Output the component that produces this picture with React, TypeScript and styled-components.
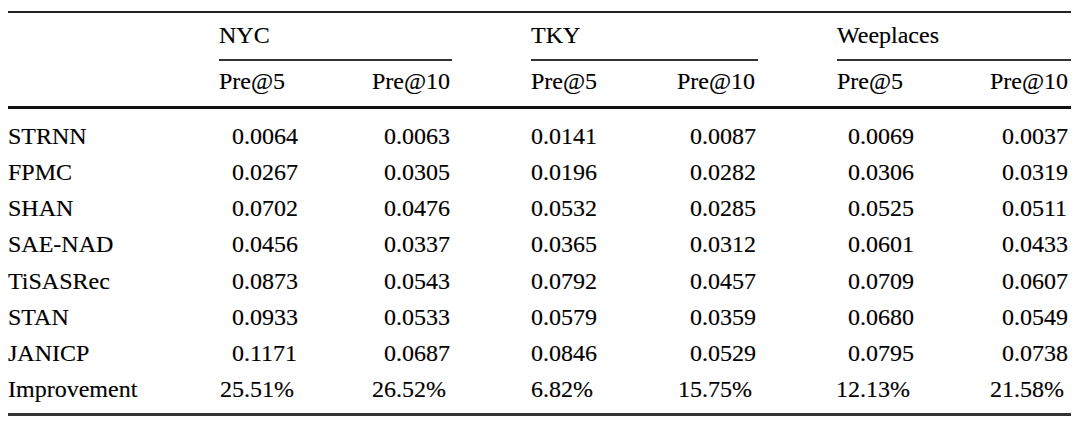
import React from "react";
import styled, { createGlobalStyle } from "styled-components";

const Global = createGlobalStyle`
  html, body {
    margin: 0;
    padding: 0;
    background: #ffffff;
  }
  body {
    font-family: "Liberation Serif", "Times New Roman", serif;
    color: #000000;
  }
`;

const Page = styled.div`
  padding: 11px 0 0 8px;
  width: 1080px;
  box-sizing: border-box;
`;

const Table = styled.div`
  display: grid;
  width: 1063px;
  grid-template-columns: 211px 153px 80px 79px 146px 81px 79px 153px 81px;
  grid-auto-rows: auto;
  font-size: 24px;
  -webkit-text-stroke: 0.15px #000;
`;

const Rule = styled.div<{ $weight: number; $col: string; $before?: number; $after?: number; $tone?: string }>`
  grid-column: ${(p) => p.$col};
  height: ${(p) => p.$weight}px;
  background: ${(p) => p.$tone ?? "#222"};
  margin-top: ${(p) => p.$before ?? 0}px;
  margin-bottom: ${(p) => p.$after ?? 0}px;
`;

const HeadCell = styled.div<{ $col: string; $top: number; $bottom: number }>`
  grid-column: ${(p) => p.$col};
  line-height: 36px;
  padding-top: ${(p) => p.$top}px;
  padding-bottom: ${(p) => p.$bottom}px;
  white-space: nowrap;
`;

const Label = styled.div`
  grid-column: 1;
  line-height: 36.14px;
  white-space: nowrap;
`;

const Num = styled.div<{ $col: number; $shift: number }>`
  grid-column: ${(p) => p.$col};
  line-height: 36.14px;
  white-space: nowrap;
  margin-left: ${(p) => p.$shift}px;
`;

const Int = styled.span`
  display: inline-block;
  width: 24px;
  text-align: right;
`;

type Col = { col: number; shift: number };

const dataCols: Col[] = [
  { col: 2, shift: 1 },
  { col: 3, shift: 0 },
  { col: 5, shift: -12 },
  { col: 6, shift: 1 },
  { col: 8, shift: -1 },
  { col: 9, shift: 0 },
];

const rows: [string, string[]][] = [
  ["STRNN", ["0.0064", "0.0063", "0.0141", "0.0087", "0.0069", "0.0037"]],
  ["FPMC", ["0.0267", "0.0305", "0.0196", "0.0282", "0.0306", "0.0319"]],
  ["SHAN", ["0.0702", "0.0476", "0.0532", "0.0285", "0.0525", "0.0511"]],
  ["SAE-NAD", ["0.0456", "0.0337", "0.0365", "0.0312", "0.0601", "0.0433"]],
  ["TiSASRec", ["0.0873", "0.0543", "0.0792", "0.0457", "0.0709", "0.0607"]],
  ["STAN", ["0.0933", "0.0533", "0.0579", "0.0359", "0.0680", "0.0549"]],
  ["JANICP", ["0.1171", "0.0687", "0.0846", "0.0529", "0.0795", "0.0738"]],
  ["Improvement", ["25.51%", "26.52%", "6.82%", "15.75%", "12.13%", "21.58%"]],
];

const groups = [
  { name: "NYC", col: "2 / 4" },
  { name: "TKY", col: "5 / 7" },
  { name: "Weeplaces", col: "8 / 10" },
];

const subs = [
  { name: "Pre@5", col: "2" },
  { name: "Pre@10", col: "3" },
  { name: "Pre@5", col: "5" },
  { name: "Pre@10", col: "6" },
  { name: "Pre@5", col: "8" },
  { name: "Pre@10", col: "9" },
];

function Value({ text, c }: { text: string; c: Col }) {
  const dot = text.indexOf(".");
  return (
    <Num $col={c.col} $shift={c.shift}>
      <Int>{text.slice(0, dot)}</Int>
      {text.slice(dot)}
    </Num>
  );
}

export default function App() {
  return (
    <>
      <Global />
      <Page>
        <Table>
          <Rule $weight={2} $col="1 / -1" />
          {groups.map((g) => (
            <HeadCell key={g.name} $col={g.col} $top={4} $bottom={6}>
              {g.name}
            </HeadCell>
          ))}
          {groups.map((g) => (
            <Rule key={g.name + "-rule"} $weight={2} $col={g.col} $tone="#333" />
          ))}
          {subs.map((s, i) => (
            <HeadCell key={i} $col={s.col} $top={2} $bottom={7}>
              {s.name}
            </HeadCell>
          ))}
          <Rule $weight={3} $col="1 / -1" $after={9} $tone="#111" />
          {rows.map(([label, vals]) => (
            <React.Fragment key={label}>
              <Label>{label}</Label>
              {vals.map((v, i) => (
                <Value key={i} text={v} c={dataCols[i]} />
              ))}
            </React.Fragment>
          ))}
          <Rule $weight={3} $col="1 / -1" $before={6} $tone="#333" />
        </Table>
      </Page>
    </>
  );
}
